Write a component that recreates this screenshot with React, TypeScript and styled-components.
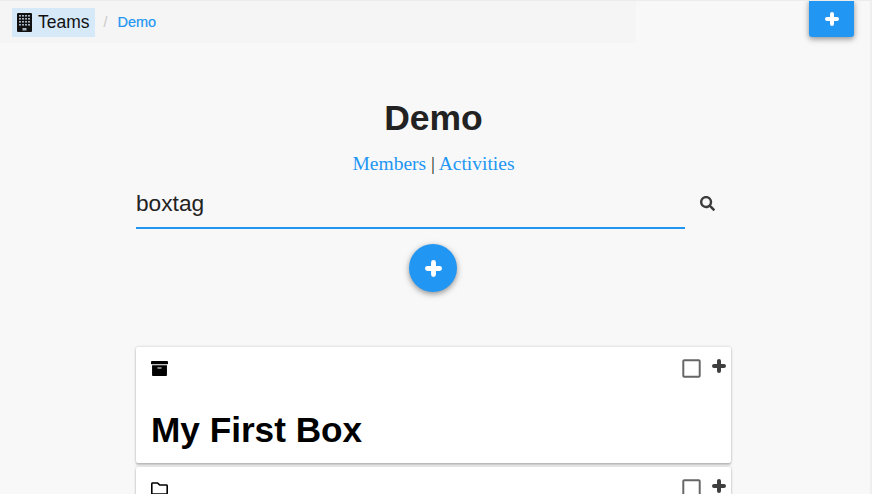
import styled, { createGlobalStyle } from 'styled-components';
import { FaArchive, FaRegFolder, FaRegSquare, FaSearch } from 'react-icons/fa';

const GlobalStyle = createGlobalStyle`
  html, body {
    margin: 0;
    height: 100%;
    overflow: hidden;
    background: #f8f8f8;
    font-family: "Liberation Sans", Arial, sans-serif;
  }
`;

const boxes = [
  { id: 1, title: 'My First Box', icon: <FaArchive /> },
  { id: 2, title: '', icon: <FaRegFolder /> },
];

const windowRows = [3, 6, 9, 12];
const windowCols = [3, 6, 9, 12];

// solid block with a tight grid of small windows and a door
const BuildingIcon = () => (
  <svg width="15" height="19" viewBox="0 0 15 19">
    <rect width="15" height="19" rx="1" fill="currentColor" />
    {windowRows.map((y) => windowCols.map((x) => (
      <rect key={`${x}-${y}`} x={x - 1} y={y - 1} width="2" height="1.6" fill="#d6e9f9" opacity="0.75" />
    )))}
    <rect x="5.5" y="15" width="4" height="2.5" fill="#d6e9f9" opacity="0.75" />
  </svg>
);

// heavier than the icon package's plus, the arms are about a third of its size
const PlusIcon = ({ size }: { size: number }) => (
  <svg width={size} height={size} viewBox="0 0 14 14" fill="none" stroke="currentColor" strokeWidth="4" strokeLinecap="round">
    <path d="M7 2v10M2 7h10" />
  </svg>
);

export default function App() {
  return (
    <Page>
      <GlobalStyle />
      <Breadcrumb>
        <TeamsCrumb><BuildingIcon />Teams</TeamsCrumb>
        <Separator>/</Separator>
        <DemoCrumb href="#">Demo</DemoCrumb>
      </Breadcrumb>
      <CornerButton><PlusIcon size={14} /></CornerButton>
      <Content>
        <Title>Demo</Title>
        <SubLinks>
          <a href="#">Members</a> | <a href="#">Activities</a>
        </SubLinks>
        <SearchRow>
          <SearchInput defaultValue="boxtag" />
          <SearchButton><FaSearch /></SearchButton>
        </SearchRow>
        <RoundButton><PlusIcon size={17} /></RoundButton>
        <BoxList>
          {boxes.map((box) => (
            <BoxCard key={box.id}>
              <BoxHeader>
                <BoxIcon>{box.icon}</BoxIcon>
                <BoxActions>
                  <CheckIcon><FaRegSquare /></CheckIcon>
                  <AddIcon><PlusIcon size={14} /></AddIcon>
                </BoxActions>
              </BoxHeader>
              {box.title && <BoxTitle>{box.title}</BoxTitle>}
            </BoxCard>
          ))}
        </BoxList>
      </Content>
    </Page>
  );
}

const Page = styled.div`
  position: relative;
  height: 494px;
  overflow: hidden;
  box-sizing: border-box;
  border-top: 1px solid #ececec;
  border-right: 2px solid #efefef;
`;

const Breadcrumb = styled.nav`
  display: flex;
  align-items: center;
  width: 636px;
  height: 42px;
  box-sizing: border-box;
  padding: 0 12px;
  background: #f5f5f5;
  border-bottom-right-radius: 4px;
`;

const TeamsCrumb = styled.span`
  display: flex;
  align-items: center;
  gap: 6px;
  height: 29px;
  padding: 0 5px;
  background: #d6e9f9;
  color: #111;
  font-size: 17.5px;
`;

const Separator = styled.span`
  margin: 0 10px 0 9px;
  color: #c8c8c8;
  font-size: 14px;
`;

const DemoCrumb = styled.a`
  color: #2196f3;
  font-size: 14.5px;
  text-decoration: none;
  -webkit-text-stroke: 0.2px #2196f3;
`;

const CornerButton = styled.button`
  position: absolute;
  top: -1px;
  right: 16px;
  display: flex;
  align-items: center;
  justify-content: center;
  width: 45px;
  height: 37px;
  padding: 0;
  border: none;
  border-radius: 0 0 3px 3px;
  background: #2196f3;
  color: #fff;
  box-shadow: 0 2px 5px rgba(0, 0, 0, 0.3), 0 2px 8px rgba(0, 0, 0, 0.15);
`;

const Content = styled.main`
  width: 595px;
  margin-left: 136px;
  padding-top: 55px;
`;

const Title = styled.h1`
  margin: 0;
  height: 40px;
  color: #222;
  font-size: 35.5px;
  line-height: 40px;
  font-weight: 700;
  text-align: center;
`;

const SubLinks = styled.div`
  margin-top: 14px;
  height: 24px;
  color: #222;
  font-family: "Liberation Serif", serif;
  font-size: 19.5px;
  line-height: 24px;
  text-align: center;
  a {
    color: #2196f3;
    text-decoration: none;
  }
`;

const SearchRow = styled.div`
  display: flex;
  align-items: flex-start;
  margin-top: 12px;
`;

const SearchInput = styled.input`
  flex: none;
  width: 549px;
  height: 41px;
  box-sizing: border-box;
  padding: 0 0 8px;
  border: none;
  border-bottom: 2px solid #2196f3;
  outline: none;
  background: transparent;
  color: #222;
  font-family: inherit;
  font-size: 22.7px;
`;

const SearchButton = styled.span`
  display: flex;
  margin: 8px 0 0 15px;
  color: #3c3c3c;
  font-size: 15px;
`;

const RoundButton = styled.button`
  display: flex;
  align-items: center;
  justify-content: center;
  width: 48px;
  height: 48px;
  margin: 15px 0 0 273px;
  padding: 0;
  border: none;
  border-radius: 50%;
  background: #2196f3;
  color: #fff;
  box-shadow: 0 2px 5px rgba(0, 0, 0, 0.3), 0 2px 8px rgba(0, 0, 0, 0.15);
`;

const BoxList = styled.div`
  display: flex;
  flex-direction: column;
  gap: 4px;
  margin-top: 55px;
`;

const BoxCard = styled.article`
  box-sizing: border-box;
  width: 595px;
  height: 116px;
  padding: 11px 5px 0 15px;
  border-radius: 2px;
  background: #fff;
  box-shadow: 0 2px 2px rgba(0, 0, 0, 0.2), 0 0 3px rgba(0, 0, 0, 0.2);
`;

const BoxHeader = styled.div`
  display: flex;
  justify-content: space-between;
  align-items: flex-start;
`;

const BoxIcon = styled.span`
  display: flex;
  margin-top: 2px;
  color: #000;
  font-size: 17px;
`;

const BoxActions = styled.div`
  display: flex;
  align-items: flex-start;
  gap: 10px;
`;

const CheckIcon = styled.span`
  display: flex;
  color: #666;
  font-size: 21px;
`;

const AddIcon = styled.span`
  display: flex;
  margin-top: 1px;
  color: #3f3f3f;
`;

const BoxTitle = styled.h2`
  margin: 31px 0 0;
  color: #000;
  font-size: 35.2px;
  line-height: 40px;
  font-weight: 700;
`;
